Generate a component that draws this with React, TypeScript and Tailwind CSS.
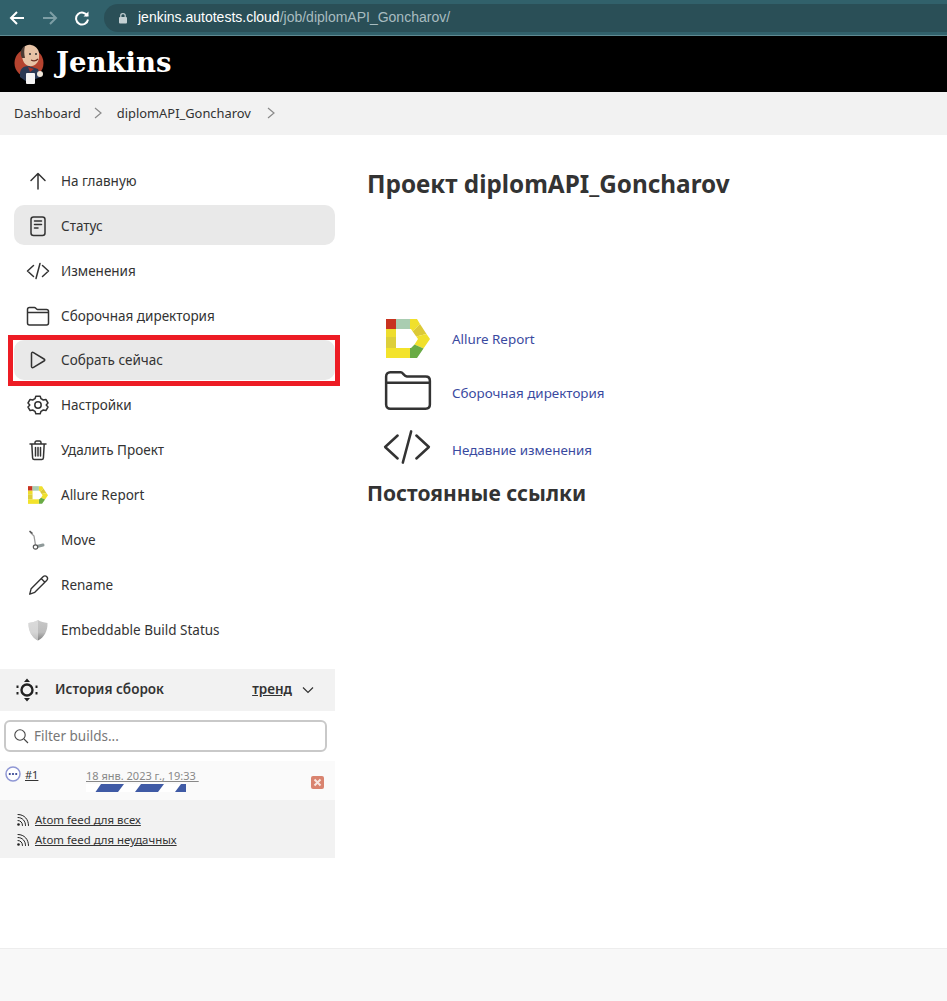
import React from "react";

function Jenkins() {
  return (
    <svg width="32" height="40" viewBox="0 0 32 40" className="shrink-0">
      <circle cx="15" cy="19" r="14.5" fill="#b5432f" />
      <path d="M6 33 C5 25 9 22 15 22 L24 25 L27 33 L13 38 Z" fill="#2b3a55" />
      <path d="M8 11 C7 4 12 0 17 1 C23 2 26 7 25 13 C25 19 20 23 15 22 C11 21 8 17 8 11 Z" fill="#e8c3a6" />
      <path d="M8 14 C5 8 8 3 11 2 C10 6 10 10 11 14 Z" fill="#4b3a33" />
      <path d="M17 16 Q21 18 24 15" stroke="#6b2e22" strokeWidth="1.2" fill="none" />
      <circle cx="16" cy="10" r="1" fill="#333" />
      <circle cx="22" cy="10" r="1" fill="#333" />
      <path d="M14 23 L20 25 L16 28 Z" fill="#a83228" />
      <rect x="12" y="29" width="9" height="11" rx="1" fill="#f4f4f4" />
      <circle cx="26" cy="30" r="3" fill="#f0e6da" />
    </svg>
  );
}

function Allure({ w, h }: { w: number; h: number }) {
  return (
    <svg width={w} height={h} viewBox="0 0 44 39" className="block">
      <rect x="0" y="0" width="10" height="10" fill="#c8331f" />
      <rect x="10" y="0" width="14" height="10" fill="#a9cdb1" />
      <path d="M24 0 H31 L34 5 L26.7 12.5 L25 10 H24 Z" fill="#f0e02c" />
      <path d="M34 5 L40.5 15 L30.2 17.5 L26.7 12.5 Z" fill="#dcc936" />
      <path d="M40.5 15 L44 20 L37.5 29.5 L28.5 25.5 L32 20 L30.2 17.5 Z" fill="#f0e02c" />
      <path d="M37.5 29.5 L31 39 H24 V29 H25 L28.5 25.5 Z" fill="#69ab45" />
      <rect x="0" y="29" width="24" height="10" fill="#f3e32b" />
      <rect x="0" y="10" width="10" height="8" fill="#eedd2e" />
      <rect x="0" y="18" width="10" height="11" fill="#ddcf3a" />
    </svg>
  );
}

const S = { fill: "none", stroke: "currentColor", strokeWidth: 1.5, strokeLinecap: "round" as const, strokeLinejoin: "round" as const };

const IArrow = () => (
  <svg width="24" height="24" viewBox="0 0 24 24" {...S}><path d="M12 20 V5 M5 11.5 L12 4.5 L19 11.5" /></svg>
);
const IDoc = () => (
  <svg width="24" height="24" viewBox="0 0 24 24" {...S}><rect x="5" y="3" width="14" height="18.5" rx="2.5" /><path d="M8.5 7 H15.5 M8.5 10.5 H15.5 M8.5 14 H12" /></svg>
);
const ICode = ({ size = 24, w = 1.5 }: { size?: number; w?: number }) => (
  <svg width={size} height={size} viewBox="0 0 24 24" {...S} strokeWidth={w}><path d="M7.5 6.5 L1.5 12 L7.5 17.5 M16.5 6.5 L22.5 12 L16.5 17.5 M14 4.5 L10 19.5" /></svg>
);
const IFolder = ({ w = 1.5, size = 24 }: { w?: number; size?: number }) => (
  <svg width={size} height={size} viewBox="0 0 24 24" {...S} strokeWidth={w}><path d="M1.5 7 V5.5 C1.5 4.3 2.3 3.5 3.5 3.5 H8.5 C9.6 3.5 10 5.3 11.5 5.5 H20.5 C21.7 5.5 22.5 6.3 22.5 7.5 V19 C22.5 20.2 21.7 21 20.5 21 H3.5 C2.3 21 1.5 20.2 1.5 19 Z M1.5 8.5 H22.5" /></svg>
);
const IPlay = () => (
  <svg width="24" height="24" viewBox="0 0 24 24" {...S}><path d="M5.5 5.5 C5.5 4.4 6.5 4 7.5 4.6 L18 11 C19 11.6 19 12.4 18 13 L7.5 19.4 C6.5 20 5.5 19.6 5.5 18.5 Z" /></svg>
);
const IGear = () => (
  <svg width="24" height="24" viewBox="0 0 24 24" {...S}>
    <path d="M9.8 3.2 H14.2 L15 5.7 L17.3 7 L19.9 6.4 L22 10 L20.2 12 L22 14 L19.9 17.6 L17.3 17 L15 18.3 L14.2 20.8 H9.8 L9 18.3 L6.7 17 L4.1 17.6 L2 14 L3.8 12 L2 10 L4.1 6.4 L6.7 7 L9 5.7 Z" />
    <circle cx="12" cy="12" r="3.2" />
  </svg>
);
const ITrash = () => (
  <svg width="24" height="24" viewBox="0 0 24 24" {...S}><path d="M4 6 H20 M9 6 V4.5 C9 3.7 9.7 3 10.5 3 H13.5 C14.3 3 15 3.7 15 4.5 V6 M5.8 6 L6.6 20 C6.7 21 7.4 21.5 8.2 21.5 H15.8 C16.6 21.5 17.3 21 17.4 20 L18.2 6 M9.5 9.5 V18 M12 9.5 V18 M14.5 9.5 V18" /></svg>
);
const IMove = () => (
  <svg width="24" height="24" viewBox="0 0 24 24">
    <path d="M4 4 L8 8 L9.5 17" stroke="#9a9a9a" strokeWidth="1.3" fill="none" />
    <path d="M3.5 3 L6.5 5.5" stroke="#555" strokeWidth="1.6" />
    <path d="M11 18.5 L17 17" stroke="#8f9a9a" strokeWidth="3" strokeLinecap="round" />
    <circle cx="9.5" cy="19" r="2.2" fill="#fff" stroke="#555" strokeWidth="1.2" />
  </svg>
);
const IPencil = () => (
  <svg width="22" height="22" viewBox="0 0 24 24" {...S} className="ml-[1px]"><path d="M3 22 L4.5 16 L17.5 3 C18.8 1.8 20.5 1.8 21.6 3 C22.7 4.2 22.6 5.8 21.4 7 L8.5 20 Z M15.5 5 L19.5 9" /></svg>
);
const IShield = () => (
  <svg width="24" height="24" viewBox="0 0 24 24">
    <defs>
      <linearGradient id="sg" x1="0" x2="0" y1="0" y2="1">
        <stop offset="0" stopColor="#c8c8c8" />
        <stop offset="0.6" stopColor="#bcbcbc" />
        <stop offset="1" stopColor="#808080" />
      </linearGradient>
    </defs>
    <path d="M12 2 C15 4 18 4.5 21.5 5 C21.8 13 18 19.5 12 22.5 C6 19.5 2.2 13 2.5 5 C6 4.5 9 4 12 2 Z" fill="url(#sg)" />
    <path d="M12 2 C9 4 6 4.5 2.5 5 C2.2 13 6 19.5 12 22.5 Z" fill="#e6e6e6" opacity="0.6" />
  </svg>
);
const IRss = () => (
  <svg width="14" height="14" viewBox="0 0 14 14" fill="none" stroke="#222" strokeWidth="1" strokeLinecap="round" className="shrink-0">
    <circle cx="2.5" cy="11.5" r="1.3" fill="#222" stroke="none" />
    <path d="M2 7.5 C4.5 7.5 6.5 9.5 6.5 12.5 M2 4.5 C6.5 4.5 9.5 8 9.5 12.5 M2 1.5 C8.5 1.5 12.5 6.5 12.5 12.5" />
  </svg>
);

type Item = { label: string; icon: React.ReactNode; active?: boolean; boxed?: boolean; low?: boolean };
const items: Item[] = [
  { label: "На главную", icon: <IArrow />, low: true },
  { label: "Статус", icon: <IDoc />, active: true, low: true },
  { label: "Изменения", icon: <ICode />, low: true },
  { label: "Сборочная директория", icon: <IFolder />, low: true },
  { label: "Собрать сейчас", icon: <IPlay />, active: true, boxed: true },
  { label: "Настройки", icon: <IGear /> },
  { label: "Удалить Проект", icon: <ITrash /> },
  { label: "Allure Report", icon: <span className="ml-[2px]"><Allure w={20} h={18} /></span> },
  { label: "Move", icon: <IMove /> },
  { label: "Rename", icon: <IPencil /> },
  { label: "Embeddable Build Status", icon: <IShield /> },
];

function Chev() {
  return (
    <svg width="8" height="12" viewBox="0 0 8 12" fill="none" stroke="#8a8a8a" strokeWidth="1.2" className="block"><path d="M1 1 L7 6 L1 11" /></svg>
  );
}

export default function App() {
  return (
    <div className="flex flex-col h-[1001px] w-[947px] overflow-hidden bg-white text-[#333] font-['Noto_Sans','Open_Sans',sans-serif]">
      {/* browser bar */}
      <div className="h-[36px] shrink-0 flex items-center bg-[#31616b] border-b border-[#5f8a92] pl-[9px]">
        <svg width="16" height="16" viewBox="0 0 16 16" fill="none" stroke="#fff" strokeWidth="2"><path d="M15 8 H2 M8 2 L2 8 L8 14" /></svg>
        <svg width="16" height="16" viewBox="0 0 16 16" fill="none" stroke="#7d9ea5" strokeWidth="2" className="ml-[17px]"><path d="M1 8 H14 M8 2 L14 8 L8 14" /></svg>
        <svg width="16" height="16" viewBox="0 0 16 16" fill="none" stroke="#fff" strokeWidth="2" className="ml-[16px]"><path d="M13.5 6 A6 6 0 1 0 14 9.5" /><path d="M14.5 1.5 L14.5 6.5 L9.5 6.5 Z" fill="#fff" stroke="none" /></svg>
        <div className="ml-[14px] flex-1 h-[28px] rounded-l-full bg-[#2a4f57] flex items-center pl-[14px]">
          <svg width="10" height="12" viewBox="0 0 10 12" className="shrink-0">
            <rect x="1" y="5" width="8" height="6.5" rx="1" fill="#c4d0d3" />
            <path d="M2.8 5 V3.4 C2.8 1 7.2 1 7.2 3.4 V5" fill="none" stroke="#c4d0d3" strokeWidth="1.2" />
          </svg>
          <span className="ml-[10px] text-[14px] text-white whitespace-nowrap font-['Liberation_Sans',sans-serif]">
            jenkins.autotests.cloud<span className="text-[#a8bcc0]">/job/diplomAPI_Goncharov/</span>
          </span>
        </div>
      </div>

      {/* header */}
      <div className="h-[56px] shrink-0 bg-black flex items-center pl-[14px]">
        <Jenkins />
        <span className="ml-[10px] -mt-[3px] text-[27.5px] font-bold text-white leading-none font-['DejaVu_Serif',serif]">Jenkins</span>
      </div>

      {/* breadcrumb */}
      <div className="h-[43px] shrink-0 bg-[#f2f2f2] flex items-center pl-[14px] text-[12.9px] text-[#333]">
        <span>Dashboard</span>
        <span className="ml-[13px] -mt-[2px]"><Chev /></span>
        <span className="ml-[15px]">diplomAPI_Goncharov</span>
        <span className="ml-[16px] -mt-[2px]"><Chev /></span>
      </div>

      <div className="flex flex-1 min-h-0">
        {/* sidebar */}
        <aside className="w-[335px] shrink-0 pt-[25px] flex flex-col">
          <nav className="pl-[14px] flex flex-col gap-[5px]">
            {items.map((it) => (
              <div
                key={it.label}
                className={
                  "relative h-[40px] flex items-center rounded-[10px] " +
                  (it.active ? "bg-[#e9e9e9] " : "") +
                  (it.low ? "pt-[2px]" : "")
                }
              >
                <span className="w-[47px] pl-[12px] shrink-0 flex items-center text-[#333]">{it.icon}</span>
                <span className="text-[13.5px] text-[#333] whitespace-nowrap">{it.label}</span>
                {it.boxed && (
                  <div className="absolute left-[-6px] top-[-5px] w-[332px] h-[51px] border-[5px] border-[#ed1c24]" />
                )}
              </div>
            ))}
          </nav>

          <div className="mt-[19px] h-[42px] bg-[#f2f2f2] flex items-center pl-[15px] pr-[21px] text-[#333]">
            <svg width="24" height="24" viewBox="0 0 24 24" fill="none" stroke="#222">
              <circle cx="12" cy="12" r="5.5" strokeWidth="2.4" />
              <path d="M12 0.5 L15 4 H9 Z M12 23.5 L15 20 H9 Z" fill="#222" stroke="none" />
              <path d="M2.5 7.5 V10 M21.5 7.5 V10 M2.5 14 V16.5 M21.5 14 V16.5" strokeWidth="2" />
            </svg>
            <span className="ml-[16px] -mt-[2px] text-[13.5px] font-semibold">История сборок</span>
            <span className="ml-auto -mt-[2px] text-[13.5px] font-semibold underline">тренд</span>
            <svg width="12" height="8" viewBox="0 0 12 8" fill="none" stroke="#333" strokeWidth="1.2" className="ml-[10px]"><path d="M1 1.5 L6 6.5 L11 1.5" /></svg>
          </div>

          <div className="pl-[4px] pr-[8px] pt-[9px] pb-[9px]">
            <div className="h-[32px] flex items-center border-2 border-[#c9c9c9] rounded-[6px] bg-white pl-[7px]">
              <svg width="16" height="16" viewBox="0 0 16 16" fill="none" stroke="#444" strokeWidth="1.1"><circle cx="7" cy="7" r="5.2" /><path d="M11 11 L15 15" /></svg>
              <span className="ml-[5px] text-[13.5px] text-[#777]">Filter builds...</span>
            </div>
          </div>

          <div className="relative h-[39px] bg-[#fafafa] text-[11px]">
            <svg width="16" height="16" viewBox="0 0 16 16" className="absolute left-[5px] top-[5px]">
              <circle cx="8" cy="8" r="7" fill="#fff" stroke="#8f97d4" strokeWidth="1.5" />
              <circle cx="4.8" cy="8" r="1.1" fill="#2c3d8f" />
              <circle cx="8" cy="8" r="1.1" fill="#2c3d8f" />
              <circle cx="11.2" cy="8" r="1.1" fill="#2c3d8f" />
            </svg>
            <span className="absolute left-[25px] top-[6px] text-[#333] underline">#1</span>
            <span className="absolute left-[86px] top-[7px] text-[#888] underline whitespace-nowrap">18 янв. 2023 г., 19:33&nbsp;</span>
            <svg width="100" height="8" viewBox="0 0 100 8" className="absolute left-[86px] top-[23px]">
              <rect width="100" height="8" fill="#fff" />
              <path d="M9.5 8 L15 0 H38 L32 8 Z M49 8 L55 0 H78 L72 8 Z M89 8 L95 0 H100 V8 Z" fill="#3f5aa5" />
            </svg>
            <svg width="13" height="13" viewBox="0 0 13 13" className="absolute left-[311px] top-[15px]">
              <rect width="13" height="13" rx="2" fill="#d9836f" />
              <path d="M3.5 3.5 L9.5 9.5 M9.5 3.5 L3.5 9.5" stroke="#f7e6e0" strokeWidth="2" />
            </svg>
          </div>

          <div className="h-[58px] bg-[#f2f2f2] pl-[16px] pt-[13px] flex flex-col gap-[6px] text-[11.4px] text-[#333]">
            <div className="h-[14px] flex items-center gap-[5px]"><IRss /><span className="underline whitespace-nowrap">Atom feed для всех</span></div>
            <div className="h-[14px] flex items-center gap-[5px]"><IRss /><span className="underline whitespace-nowrap">Atom feed для неудачных</span></div>
          </div>
        </aside>

        {/* main */}
        <main className="flex-1 pl-[32px] pt-[33px]">
          <h1 className="text-[24.3px] leading-[32px] font-bold text-[#333]">Проект diplomAPI_Goncharov</h1>
          <div className="mt-[116px] pl-[18px] flex flex-col text-[13.4px] text-[#3a4a9f]">
            <div className="h-[46px] flex items-center">
              <span className="w-[67px] shrink-0 pl-[1px] mb-[2px]"><Allure w={44} h={39} /></span>
              <span>Allure Report</span>
            </div>
            <div className="mt-[8px] h-[46px] flex items-center">
              <span className="w-[67px] shrink-0 text-[#333] -ml-[2px] mb-[6px] mr-[2px]"><IFolder w={1.2} size={50} /></span>
              <span>Сборочная директория</span>
            </div>
            <div className="mt-[11px] h-[46px] flex items-center">
              <span className="w-[67px] shrink-0 text-[#333] -ml-[3px] mb-[6px] mr-[3px]"><ICode size={50} w={1.2} /></span>
              <span>Недавние изменения</span>
            </div>
          </div>
          <h2 className="mt-[6px] text-[21px] leading-[28px] font-bold text-[#333]">Постоянные ссылки</h2>
        </main>
      </div>

      {/* footer */}
      <div className="h-[53px] shrink-0 bg-[#f8f8f8] border-t border-[#ededed]" />
    </div>
  );
}
